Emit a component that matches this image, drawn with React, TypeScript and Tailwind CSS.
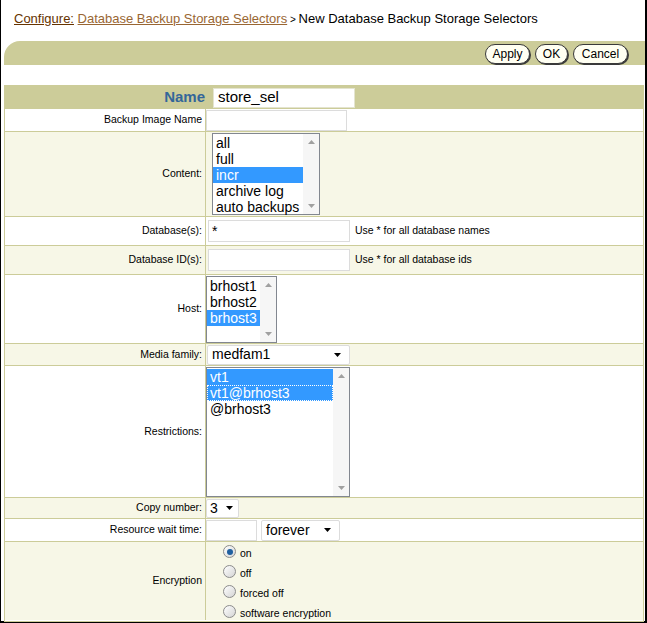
import React from 'react';

const FONT = { fontFamily: '"Liberation Sans", Arial, sans-serif' };

const Arrow = ({ dir, color = '#a0a0a0' }: { dir: 'up' | 'down'; color?: string }) => (
  <svg width="7" height="4" viewBox="0 0 7 4">
    {dir === 'up' ? <path d="M0 4 L3.5 0 L7 4 Z" fill={color} /> : <path d="M0 0 L3.5 4 L7 0 Z" fill={color} />}
  </svg>
);

type ListProps = {
  items: string[];
  selected: number[];
  focus?: number;
  className: string;
};

const ListBox = ({ items, selected, focus, className }: ListProps) => (
  <div className={`flex border border-[#828790] bg-white ${className}`}>
    <div className="flex-1 pt-[1px]">
      {items.map((it, i) => (
        <div
          key={it}
          className={`h-[16px] pl-[3px] text-[14px] leading-[16px] ${
            selected.includes(i) ? 'bg-[#3399ff] text-white' : 'text-black'
          } ${focus === i ? 'outline-1 outline-dotted outline-white -outline-offset-1' : ''}`}
        >
          {it}
        </div>
      ))}
    </div>
    <div className="flex w-[16px] flex-col items-center justify-between bg-[#f6f6f6] py-[6px]">
      <Arrow dir="up" />
      <Arrow dir="down" />
    </div>
  </div>
);

const Select = ({ value, className }: { value: string; className: string }) => (
  <div
    className={`flex items-center justify-between rounded-[2px] border border-[#dcdcdc] bg-white pl-[4px] pr-[8px] text-[14px] ${className}`}
  >
    <span>{value}</span>
    <Arrow dir="down" color="#000" />
  </div>
);

const Radio = ({ checked }: { checked?: boolean }) => (
  <span className="flex h-[13px] w-[13px] items-center justify-center rounded-full border border-[#8c8c8c] bg-gradient-to-br from-white to-[#d4d4d4]">
    {checked && <span className="h-[6px] w-[6px] rounded-full bg-[#1f5f9f]" />}
  </span>
);

type RowProps = {
  label: React.ReactNode;
  h: string;
  bg: string;
  children: React.ReactNode;
  last?: boolean;
};

const Row = ({ label, h, bg, children, last }: RowProps) => (
  <div className={`flex ${h} ${bg} ${last ? '' : 'border-b border-[#cccc99]'}`}>
    <div className="flex w-[201px] items-center justify-end border-r border-[#cccc99] pr-[3px] text-[10.5px] text-black">
      {label}
    </div>
    <div className="flex flex-1 items-center">{children}</div>
  </div>
);

const Button = ({ children, w }: { children: string; w: string }) => (
  <button
    className={`${w} h-[20px] rounded-full border border-[#3a3a3a] bg-[#fffff2] text-[12px] leading-[18px] text-black shadow-[1px_1px_0_#3a3a3a]`}
  >
    {children}
  </button>
);

export default function App() {
  return (
    <div
      style={FONT}
      className="box-border h-[623px] w-[647px] border-b-2 border-l border-r-2 border-black bg-white"
    >
      <div className="pl-[13px] pt-[11px] text-[13px] leading-[16px]">
        <a className="text-[#663300] underline">Configure:</a>{' '}
        <a className="text-[#996633] underline">Database Backup Storage Selectors</a>
        <span className="text-[10px]"> &gt; </span>
        <span className="text-black">New Database Backup Storage Selectors</span>
      </div>

      <div className="ml-[3px] mt-[13px] flex h-[24px] items-center justify-end gap-[5px] rounded-tl-[16px] bg-[#cccc99] pr-[17px] pt-[1px]">
        <Button w="w-[45px]">Apply</Button>
        <Button w="w-[33px]">OK</Button>
        <Button w="w-[55px]">Cancel</Button>
      </div>

      <div className="ml-[3px] mr-[1px] mt-[20px] box-border h-[537px] border border-[#cccc99]">
        <div className="flex h-[23px] bg-[#cccc99]">
          <div className="flex w-[201px] items-center justify-end pr-[1px] text-[15px] font-bold text-[#336699]">
            Name
          </div>
          <div className="flex items-center pl-[7px]">
            <div className="flex h-[20px] w-[142px] items-center border border-[#e4e4d0] bg-white pl-[4px] text-[15px]">
              store_sel
            </div>
          </div>
        </div>

        <Row label="Backup Image Name" h="h-[23px]" bg="bg-white">
          <div className="ml-[0px] h-[21px] w-[141px] border border-[#dcdcdc] bg-white" />
        </Row>

        <Row label="Content:" h="h-[85px]" bg="bg-[#f7f7e7]">
          <ListBox
            className="ml-[6px] h-[82px] w-[108px]"
            items={['all', 'full', 'incr', 'archive log', 'auto backups']}
            selected={[2]}
          />
        </Row>

        <Row label="Database(s):" h="h-[29px]" bg="bg-white">
          <div className="ml-[2px] flex h-[22px] w-[142px] items-center border border-[#dcdcdc] bg-white pl-[3px] text-[14px]">
            *
          </div>
          <span className="ml-[5px] text-[10.5px]">Use * for all database names</span>
        </Row>

        <Row label="Database ID(s):" h="h-[29px]" bg="bg-[#f7f7e7]">
          <div className="ml-[2px] h-[22px] w-[142px] border border-[#dcdcdc] bg-white" />
          <span className="ml-[5px] text-[10.5px]">Use * for all database ids</span>
        </Row>

        <Row label="Host:" h="h-[69px]" bg="bg-white">
          <ListBox
            className="h-[67px] w-[71px]"
            items={['brhost1', 'brhost2', 'brhost3']}
            selected={[2]}
          />
        </Row>

        <Row label="Media family:" h="h-[22px]" bg="bg-[#f7f7e7]">
          <Select value="medfam1" className="ml-[1px] h-[20px] w-[143px]" />
        </Row>

        <Row label="Restrictions:" h="h-[132px]" bg="bg-white">
          <ListBox
            className="h-[130px] w-[144px]"
            items={['vt1', 'vt1@brhost3', '@brhost3']}
            selected={[0, 1]}
            focus={1}
          />
        </Row>

        <Row label="Copy number:" h="h-[21px]" bg="bg-[#f7f7e7]">
          <Select value="3" className="h-[19px] w-[33px] !pl-[3px] !pr-[5px]" />
        </Row>

        <Row label="Resource wait time:" h="h-[23px]" bg="bg-white">
          <div className="h-[21px] w-[51px] border border-[#dcdcdc] bg-white" />
          <Select value="forever" className="ml-[4px] h-[21px] w-[79px]" />
        </Row>

        <Row label="Encryption" h="h-[78px]" bg="bg-[#f7f7e7]" last>
          <div className="flex flex-col gap-[7px] pl-[17px] pt-[1px] text-[10.5px]">
            {[
              ['on', true],
              ['off', false],
              ['forced off', false],
              ['software encryption', false],
            ].map(([l, c]) => (
              <div key={l as string} className="flex h-[13px] items-center gap-[4px]">
                <Radio checked={c as boolean} />
                <span className="mt-[4px]">{l as string}</span>
              </div>
            ))}
          </div>
        </Row>
      </div>
    </div>
  );
}
